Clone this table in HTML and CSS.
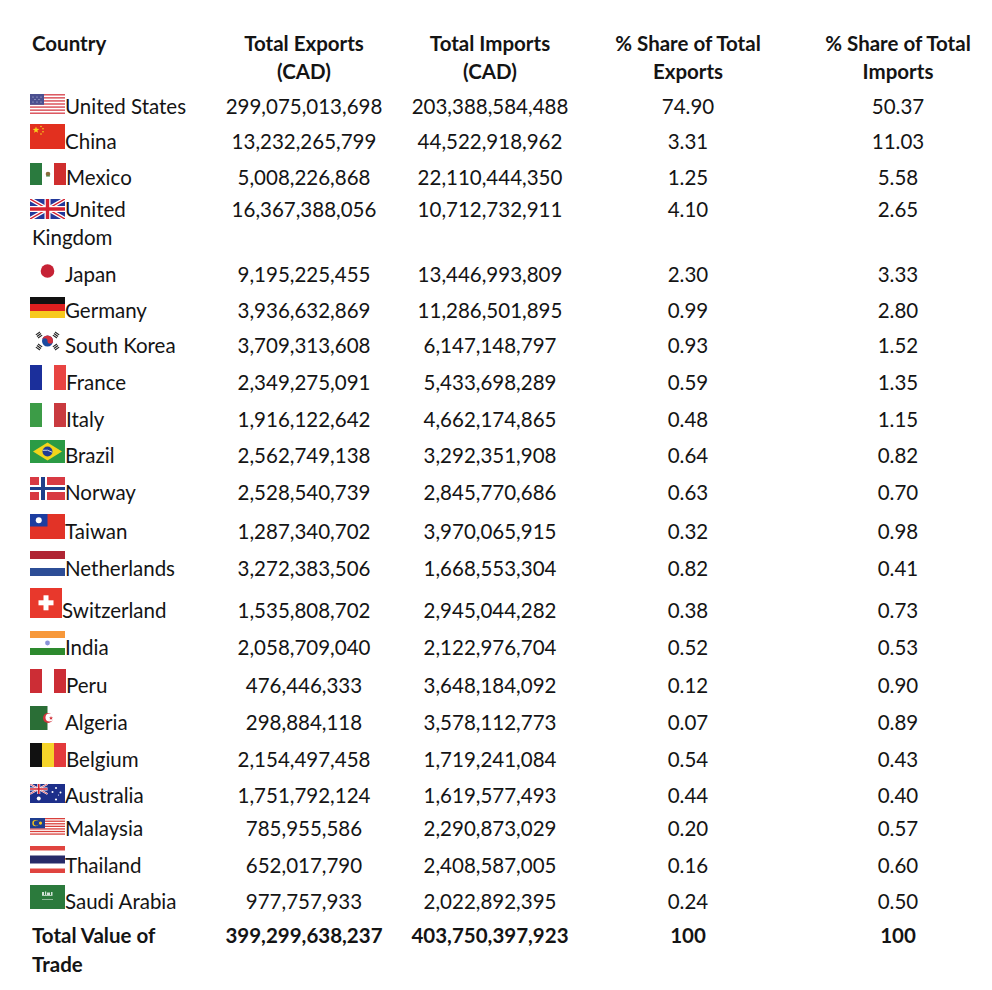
FILE: index.html
```html
<!DOCTYPE html>
<html lang="en">
<head>
<meta charset="utf-8">
<title>Canada Trade by Country</title>
<link rel="stylesheet" href="styles.css">
</head>
<body>
<table class="trade">
  <colgroup>
    <col class="c1"><col class="c2"><col class="c3"><col class="c4"><col class="c5">
  </colgroup>
  <thead>
    <tr>
      <th class="country">Country</th>
      <th>Total Exports<br>(CAD)</th>
      <th>Total Imports<br>(CAD)</th>
      <th>% Share of Total<br>Exports</th>
      <th class="last">% Share of Total<br>Imports</th>
    </tr>
  </thead>
  <tbody>
    <tr>
      <td class="country"><svg class="flag f-us" width="35" height="20" viewBox="0 0 35 20"><rect width="35" height="20" fill="#fff"/><g fill="#dc5a62"><rect y="0" width="35" height="1.54"/><rect y="3.08" width="35" height="1.54"/><rect y="6.15" width="35" height="1.54"/><rect y="9.23" width="35" height="1.54"/><rect y="12.31" width="35" height="1.54"/><rect y="15.38" width="35" height="1.54"/><rect y="18.46" width="35" height="1.54"/></g><rect width="14" height="10.8" fill="#4b4f8f"/><g fill="#c8cbe6"><circle cx="3" cy="3" r=".6"/><circle cx="7" cy="3" r=".6"/><circle cx="11" cy="3" r=".6"/><circle cx="5" cy="5.5" r=".6"/><circle cx="9" cy="5.5" r=".6"/><circle cx="3" cy="8" r=".6"/><circle cx="7" cy="8" r=".6"/><circle cx="11" cy="8" r=".6"/></g></svg>United States</td>
      <td>299,075,013,698</td><td>203,388,584,488</td><td>74.90</td><td class="last">50.37</td>
    </tr>
    <tr>
      <td class="country"><svg class="flag f-cn" width="35" height="25" viewBox="0 0 35 25"><rect width="35" height="25" fill="#e2301f"/><polygon points="6,2.5 6.82,4.87 9.33,4.92 7.33,6.43 8.06,8.83 6,7.4 3.94,8.83 4.67,6.43 2.67,4.92 5.18,4.87" fill="#f7d51c"/><g fill="#f7d51c"><circle cx="11" cy="2.5" r=".8"/><circle cx="13" cy="4.8" r=".8"/><circle cx="13" cy="7.8" r=".8"/><circle cx="11" cy="10" r=".8"/></g></svg>China</td>
      <td>13,232,265,799</td><td>44,522,918,962</td><td>3.31</td><td class="last">11.03</td>
    </tr>
    <tr>
      <td class="country"><svg class="flag f-mx" width="36" height="22" viewBox="0 0 36 22"><rect width="12" height="22" fill="#2a7a3e"/><rect x="24" width="12" height="22" fill="#cf2e2e"/><circle cx="18" cy="11" r="2.3" fill="#8b6b3d"/><rect x="16" y="12.5" width="4" height="1" fill="#4a8a4a"/></svg>Mexico</td>
      <td>5,008,226,868</td><td>22,110,444,350</td><td>1.25</td><td class="last">5.58</td>
    </tr>
    <tr>
      <td class="country"><svg class="flag f-uk" width="35" height="20" viewBox="0 0 35 20"><rect width="35" height="20" fill="#23389a"/><path d="M0,0 L35,20 M35,0 L0,20" stroke="#fff" stroke-width="4"/><path d="M0,0 L35,20 M35,0 L0,20" stroke="#d3202f" stroke-width="1.4"/><path d="M17.5,0 V20 M0,10 H35" stroke="#fff" stroke-width="6"/><path d="M17.5,0 V20 M0,10 H35" stroke="#d3202f" stroke-width="3.4"/></svg>United<span class="wrap">Kingdom</span></td>
      <td>16,367,388,056</td><td>10,712,732,911</td><td>4.10</td><td class="last">2.65</td>
    </tr>
    <tr>
      <td class="country"><svg class="flag f-jp" width="35" height="20" viewBox="0 0 35 20"><circle cx="17.5" cy="9" r="6.8" fill="#c62235"/></svg>Japan</td>
      <td>9,195,225,455</td><td>13,446,993,809</td><td>2.30</td><td class="last">3.33</td>
    </tr>
    <tr>
      <td class="country"><svg class="flag f-de" width="35" height="21" viewBox="0 0 35 21"><rect width="35" height="7" fill="#111"/><rect y="7" width="35" height="7" fill="#dd1f1f"/><rect y="14" width="35" height="7" fill="#f7c91e"/></svg>Germany</td>
      <td>3,936,632,869</td><td>11,286,501,895</td><td>0.99</td><td class="last">2.80</td>
    </tr>
    <tr>
      <td class="country"><svg class="flag f-kr" width="35" height="26" viewBox="0 0 35 26"><circle cx="17.5" cy="14" r="5.5" fill="#1a4aa0"/><path d="M12,14 A5.5,5.5 0 0 1 23,14 A2.75,2.75 0 0 1 17.5,14 A2.75,2.75 0 0 0 12,14 Z" fill="#d22f3b"/><g fill="#222"><g transform="rotate(-35 9 8)"><rect x="6.5" y="5.5" width="5" height="1.2"/><rect x="6.5" y="7.4" width="5" height="1.2"/><rect x="6.5" y="9.3" width="5" height="1.2"/></g><g transform="rotate(35 26 8)"><rect x="23.5" y="5.5" width="5" height="1.2"/><rect x="23.5" y="7.4" width="5" height="1.2"/><rect x="23.5" y="9.3" width="5" height="1.2"/></g><g transform="rotate(35 9 20)"><rect x="6.5" y="17.5" width="5" height="1.2"/><rect x="6.5" y="19.4" width="5" height="1.2"/><rect x="6.5" y="21.3" width="5" height="1.2"/></g><g transform="rotate(-35 26 20)"><rect x="23.5" y="17.5" width="5" height="1.2"/><rect x="23.5" y="19.4" width="5" height="1.2"/><rect x="23.5" y="21.3" width="5" height="1.2"/></g></g></svg>South Korea</td>
      <td>3,709,313,608</td><td>6,147,148,797</td><td>0.93</td><td class="last">1.52</td>
    </tr>
    <tr>
      <td class="country"><svg class="flag f-fr" width="36" height="25" viewBox="0 0 36 25"><rect width="12" height="25" fill="#1b2f9b"/><rect x="24" width="12" height="25" fill="#e84442"/></svg>France</td>
      <td>2,349,275,091</td><td>5,433,698,289</td><td>0.59</td><td class="last">1.35</td>
    </tr>
    <tr>
      <td class="country"><svg class="flag f-it" width="36" height="24" viewBox="0 0 36 24"><rect width="12" height="24" fill="#3c9c47"/><rect x="24" width="12" height="24" fill="#c93a3f"/></svg>Italy</td>
      <td>1,916,122,642</td><td>4,662,174,865</td><td>0.48</td><td class="last">1.15</td>
    </tr>
    <tr>
      <td class="country"><svg class="flag f-br" width="35" height="23" viewBox="0 0 35 23"><rect width="35" height="23" fill="#2b9b45"/><polygon points="17.5,2.5 32,11.5 17.5,20.5 3,11.5" fill="#f2d51b"/><circle cx="17.5" cy="11.5" r="5" fill="#203c94"/><path d="M12.8,10.3 Q17.5,9.2 22.2,12.2" stroke="#fff" stroke-width=".8" fill="none"/></svg>Brazil</td>
      <td>2,562,749,138</td><td>3,292,351,908</td><td>0.64</td><td class="last">0.82</td>
    </tr>
    <tr>
      <td class="country"><svg class="flag f-no" width="35" height="23" viewBox="0 0 35 23"><rect width="35" height="23" fill="#d83a43"/><rect x="9" width="8" height="23" fill="#fff"/><rect y="8" width="35" height="7" fill="#fff"/><rect x="11" width="4" height="23" fill="#1f3f8a"/><rect y="10" width="35" height="3" fill="#1f3f8a"/></svg>Norway</td>
      <td>2,528,540,739</td><td>2,845,770,686</td><td>0.63</td><td class="last">0.70</td>
    </tr>
    <tr>
      <td class="country"><svg class="flag f-tw" width="35" height="25" viewBox="0 0 35 25"><rect width="35" height="25" fill="#e23327"/><rect width="17.5" height="12.5" fill="#1c3da0"/><circle cx="8.75" cy="6.25" r="3" fill="#fff"/></svg>Taiwan</td>
      <td>1,287,340,702</td><td>3,970,065,915</td><td>0.32</td><td class="last">0.98</td>
    </tr>
    <tr>
      <td class="country"><svg class="flag f-nl" width="35" height="25" viewBox="0 0 35 25"><rect width="35" height="8" fill="#b02533"/><rect y="17" width="35" height="8" fill="#2c4d96"/></svg>Netherlands</td>
      <td>3,272,383,506</td><td>1,668,553,304</td><td>0.82</td><td class="last">0.41</td>
    </tr>
    <tr>
      <td class="country"><svg class="flag f-ch" width="32" height="30" viewBox="0 0 32 30"><rect width="32" height="30" fill="#e8382c"/><rect x="8.5" y="12.3" width="15" height="5" fill="#fff"/><rect x="13.5" y="7.3" width="5" height="15" fill="#fff"/></svg>Switzerland</td>
      <td>1,535,808,702</td><td>2,945,044,282</td><td>0.38</td><td class="last">0.73</td>
    </tr>
    <tr>
      <td class="country"><svg class="flag f-in" width="35" height="24" viewBox="0 0 35 24"><rect width="35" height="7" fill="#f7983a"/><rect y="17" width="35" height="7" fill="#2d8a2e"/><circle cx="17.5" cy="12" r="2.4" fill="#8a94d8"/></svg>India</td>
      <td>2,058,709,040</td><td>2,122,976,704</td><td>0.52</td><td class="last">0.53</td>
    </tr>
    <tr>
      <td class="country"><svg class="flag f-pe" width="36" height="24" viewBox="0 0 36 24"><rect width="12" height="24" fill="#cc2d35"/><rect x="24" width="12" height="24" fill="#cc2d35"/></svg>Peru</td>
      <td>476,446,333</td><td>3,648,184,092</td><td>0.12</td><td class="last">0.90</td>
    </tr>
    <tr>
      <td class="country"><svg class="flag f-dz" width="35" height="24" viewBox="0 0 35 24"><rect width="17.5" height="24" fill="#2a6e36"/><circle cx="18" cy="12" r="5" fill="#d2343c"/><circle cx="19.5" cy="11.5" r="4" fill="#fff"/><polygon points="21,10 21.6,11.4 23,11.5 21.9,12.4 22.3,13.8 21,13 19.8,13.8 20.1,12.4 19,11.5 20.4,11.4" fill="#d2343c"/></svg>Algeria</td>
      <td>298,884,118</td><td>3,578,112,773</td><td>0.07</td><td class="last">0.89</td>
    </tr>
    <tr>
      <td class="country"><svg class="flag f-be" width="36" height="24" viewBox="0 0 36 24"><rect width="12" height="24" fill="#111"/><rect x="12" width="12" height="24" fill="#f6d42a"/><rect x="24" width="12" height="24" fill="#e33a3c"/></svg>Belgium</td>
      <td>2,154,497,458</td><td>1,719,241,084</td><td>0.54</td><td class="last">0.43</td>
    </tr>
    <tr>
      <td class="country"><svg class="flag f-au" width="35" height="19" viewBox="0 0 35 19"><rect width="35" height="19" fill="#1d2f8a"/><g transform="scale(.5 .5)"><path d="M0,0 L35,20 M35,0 L0,20" stroke="#fff" stroke-width="4"/><path d="M0,0 L35,20 M35,0 L0,20" stroke="#d3202f" stroke-width="1.4"/><path d="M17.5,0 V20 M0,10 H35" stroke="#fff" stroke-width="6"/><path d="M17.5,0 V20 M0,10 H35" stroke="#d3202f" stroke-width="3.4"/></g><g fill="#fff"><circle cx="8.75" cy="14.5" r="2"/><circle cx="26" cy="4" r="1"/><circle cx="30.5" cy="8.5" r="1"/><circle cx="26" cy="15.5" r="1.1"/><circle cx="22.5" cy="8" r="1"/><circle cx="28.5" cy="11" r=".6"/></g></svg>Australia</td>
      <td>1,751,792,124</td><td>1,619,577,493</td><td>0.44</td><td class="last">0.40</td>
    </tr>
    <tr>
      <td class="country"><svg class="flag f-my" width="35" height="18" viewBox="0 0 35 18"><rect width="35" height="18" fill="#fff"/><g fill="#d9403c"><rect y="0" width="35" height="1.29"/><rect y="2.57" width="35" height="1.29"/><rect y="5.14" width="35" height="1.29"/><rect y="7.71" width="35" height="1.29"/><rect y="10.29" width="35" height="1.29"/><rect y="12.86" width="35" height="1.29"/><rect y="15.43" width="35" height="1.29"/></g><rect width="15" height="10.3" fill="#1e3d8f"/><circle cx="5.5" cy="5.1" r="3.2" fill="#f5c518"/><circle cx="6.5" cy="5.1" r="2.7" fill="#1e3d8f"/><circle cx="10.5" cy="5.1" r="1.6" fill="#f5c518"/></svg>Malaysia</td>
      <td>785,955,586</td><td>2,290,873,029</td><td>0.20</td><td class="last">0.57</td>
    </tr>
    <tr>
      <td class="country"><svg class="flag f-th" width="35" height="27" viewBox="0 0 35 27"><rect width="35" height="4.5" fill="#e0443f"/><rect y="9.5" width="35" height="8" fill="#262a68"/><rect y="22.5" width="35" height="4.5" fill="#e0443f"/></svg>Thailand</td>
      <td>652,017,790</td><td>2,408,587,005</td><td>0.16</td><td class="last">0.60</td>
    </tr>
    <tr>
      <td class="country"><svg class="flag f-sa" width="35" height="24" viewBox="0 0 35 24"><rect width="35" height="24" fill="#2b7a3c"/><g fill="#fff" opacity=".8"><rect x="12" y="7" width="2" height="3"/><rect x="15" y="6.5" width="1.2" height="3.5"/><rect x="17" y="7.5" width="3" height="2.5"/><rect x="21" y="7" width="1.5" height="3"/><rect x="12" y="10" width="10.5" height=".8"/></g><rect x="12" y="14" width="11" height=".8" fill="#fff" opacity=".6"/></svg>Saudi Arabia</td>
      <td>977,757,933</td><td>2,022,892,395</td><td>0.24</td><td class="last">0.50</td>
    </tr>
    <tr class="total">
      <td class="country">Total Value of<br>Trade</td>
      <td>399,299,638,237</td><td>403,750,397,923</td><td>100</td><td class="last">100</td>
    </tr>
  </tbody>
</table>
</body>
</html>
```

FILE: styles.css
```css
html, body {
  margin: 0;
  padding: 0;
  background: #ffffff;
}

body {
  font-family: Lato, "Open Sans", "DejaVu Sans", sans-serif;
  font-size: 20.5px;
  color: #141414;
}

.trade {
  border-collapse: collapse;
  border-spacing: 0;
  table-layout: fixed;
  width: 960px;
  margin: 29px 0 0 30px;
}

.c1 { width: 184px; }
.c2 { width: 180px; }
.c3 { width: 192px; }
.c4 { width: 204px; }
.c5 { width: 200px; }

.trade th,
.trade td {
  padding: 0;
  text-align: center;
  white-space: nowrap;
}

.trade th {
  font-weight: 700;
  line-height: 28px;
  vertical-align: top;
  padding-bottom: 3px;
}

.trade td {
  line-height: 20px;
  vertical-align: baseline;
}

.trade th.country,
.trade td.country {
  text-align: left;
}

.trade th.country {
  padding-left: 2px;
}

.trade .last {
  padding-left: 16px;
}

.wrap {
  display: block;
  padding: 6px 0 0 2px;
}

.total td {
  font-weight: 700;
  line-height: 29px;
  padding-top: 8px;
}

.total td.country {
  padding-left: 2px;
}

.total td.last {
  padding-left: 16px;
}

/* Flags: bottom edge sits on the text baseline, margin-bottom pads the row */
.flag {
  display: inline-block;
  vertical-align: -4px;
  margin-bottom: 4px;
}

.f-us { margin-top: 6px; }
.f-cn { margin-top: 6px; }
.f-mx { margin-top: 10px; }
.f-uk { margin-top: 10px; vertical-align: -4px; margin-bottom: 2px; }
.f-jp { margin-top: 15px; }
.f-de { margin-top: 11px; }
.f-kr { margin-top: 5px; }
.f-fr { margin-top: 8px; }
.f-it { margin-top: 9px; }
.f-br { margin-top: 9px; }
.f-no { margin-top: 10px; }
.f-tw { margin-top: 10px; }
.f-nl { margin-top: 8px; }
.f-ch { margin-top: 8px; }
.f-in { margin-top: 9px; }
.f-pe { margin-top: 10px; }
.f-dz { margin-top: 9px; }
.f-be { margin-top: 9px; }
.f-au { margin-top: 13px; }
.f-my { margin-top: 11px; }
.f-th { margin-top: 6px; }
.f-sa { margin-top: 8px; }
```
